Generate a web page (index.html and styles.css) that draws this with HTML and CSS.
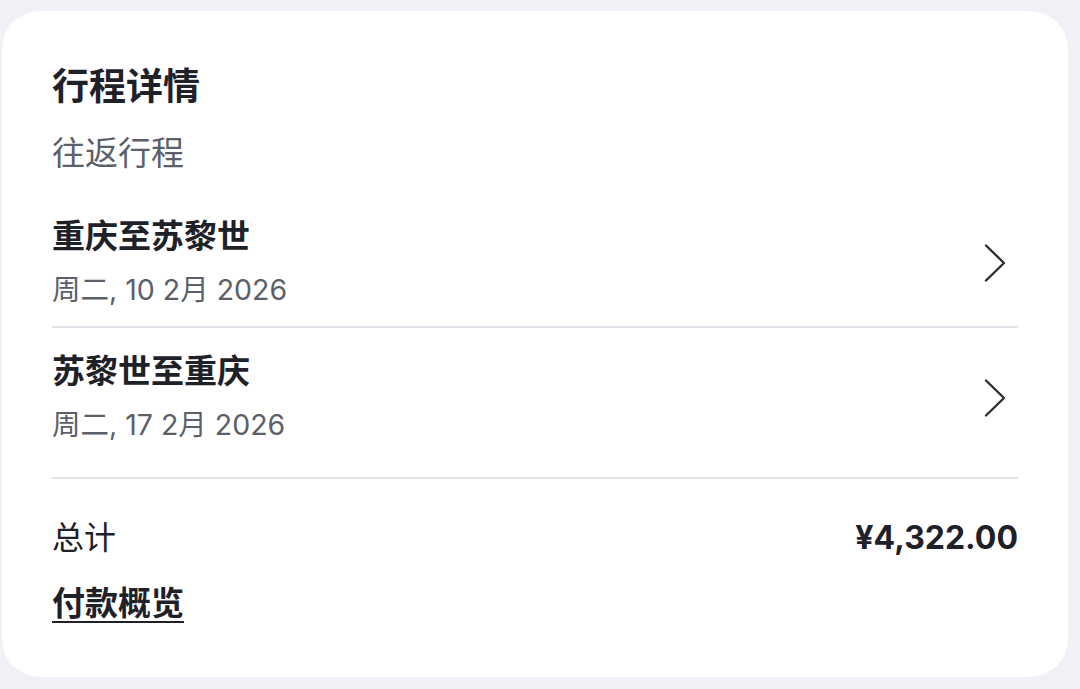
FILE: index.html
```html
<!DOCTYPE html>
<html lang="zh-CN">
<head>
<meta charset="utf-8">
<title>行程详情</title>
<link rel="stylesheet" href="styles.css">
</head>
<body>
<main class="card">
  <h1 class="title">行程详情</h1>
  <p class="subtitle">往返行程</p>
  <section class="trips">
    <a class="trip" href="#">
      <div class="trip-info">
        <div class="trip-route">重庆至苏黎世</div>
        <div class="trip-date">周二, 10 2月 2026</div>
      </div>
      <svg class="chevron" viewBox="0 0 22 38" width="22" height="38" aria-hidden="true"><polyline points="2,1.5 20,19 2,36.5" fill="none" stroke="#2b2e36" stroke-width="2.4" stroke-linecap="round" stroke-linejoin="round"/></svg>
    </a>
    <a class="trip" href="#">
      <div class="trip-info">
        <div class="trip-route">苏黎世至重庆</div>
        <div class="trip-date">周二, 17 2月 2026</div>
      </div>
      <svg class="chevron" viewBox="0 0 22 38" width="22" height="38" aria-hidden="true"><polyline points="2,1.5 20,19 2,36.5" fill="none" stroke="#2b2e36" stroke-width="2.4" stroke-linecap="round" stroke-linejoin="round"/></svg>
    </a>
  </section>
  <section class="summary">
    <div class="total-row">
      <span class="total-label">总计</span>
      <span class="total-amount">¥4,322.00</span>
    </div>
    <a class="pay-link" href="#">付款概览</a>
  </section>
</main>
</body>
</html>
```
FILE: styles.css
```css
html, body {
  margin: 0;
  padding: 0;
  background: #f0f1f6;
}
body {
  font-family: "Inter", "Noto Sans CJK SC", sans-serif;
  color: #1f2129;
  height: 689px;
  overflow: hidden;
}
.card {
  box-sizing: border-box;
  width: 1066px;
  height: 666px;
  margin: 11px 0 0 2px;
  background: #ffffff;
  border-radius: 38px;
  padding: 54px 50px 0 50px;
  display: flex;
  flex-direction: column;
}
.title {
  margin: 0;
  font-size: 37px;
  line-height: 44px;
  font-weight: 700;
  color: #1f2129;
}
.subtitle {
  margin: 22px 0 17px;
  font-size: 33px;
  line-height: 44px;
  font-weight: 400;
  color: #5a5f6a;
}
.trips {
  display: flex;
  flex-direction: column;
  border-bottom: 2px solid #e1e1ea;
  padding-bottom: 16px;
}
.trip {
  display: flex;
  align-items: center;
  justify-content: space-between;
  padding: 24px 0 16px;
  text-decoration: none;
  color: inherit;
}
.trip + .trip {
  border-top: 2px solid #e1e1ea;
  padding-top: 23px;
}
.trip-info {
  display: flex;
  flex-direction: column;
  gap: 14px;
}
.trip-route {
  font-size: 33px;
  line-height: 40px;
  font-weight: 700;
  color: #1f2129;
}
.trip-date {
  font-size: 28.5px;
  line-height: 40px;
  font-weight: 400;
  color: #5a5f6a;
}
.chevron {
  display: block;
  margin-right: 12px;
}
.summary {
  display: flex;
  flex-direction: column;
  align-items: flex-start;
  padding-top: 37px;
}
.total-row {
  align-self: stretch;
  display: flex;
  justify-content: space-between;
  align-items: center;
  height: 44px;
}
.total-label {
  font-size: 32px;
  line-height: 44px;
  font-weight: 400;
}
.total-amount {
  font-size: 32px;
  line-height: 44px;
  font-weight: 700;
}
.pay-link {
  margin-top: 21px;
  font-size: 33px;
  line-height: 44px;
  font-weight: 700;
  color: #1f2129;
  text-decoration: underline;
  text-decoration-thickness: 2px;
  text-underline-offset: 6px;
}
```
